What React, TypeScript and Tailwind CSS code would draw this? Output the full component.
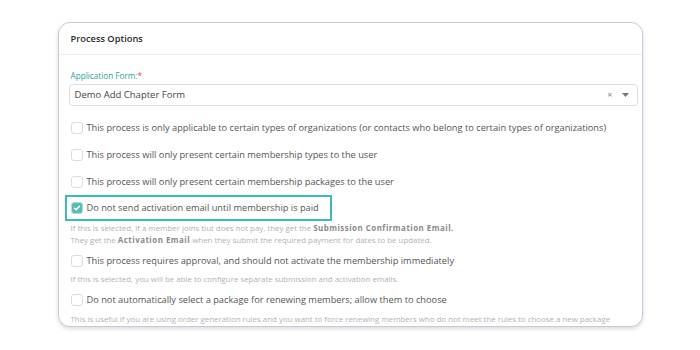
import React from "react";

function Box({ checked = false }: { checked?: boolean }) {
  if (checked) {
    return (
      <span className="flex h-[12px] w-[12px] shrink-0 items-center justify-center rounded-[3px] border border-[#a9dcd8] bg-[#5fb9b3]">
        <svg width="8" height="8" viewBox="0 0 8 8" fill="none">
          <path d="M1.5 4.2 L3.2 5.8 L6.5 2.2" stroke="white" strokeWidth="1.3" strokeLinecap="round" strokeLinejoin="round" />
        </svg>
      </span>
    );
  }
  return <span className="block h-[12px] w-[12px] shrink-0 rounded-[3px] border border-[#dcdcdc] bg-white" />;
}

function Row({ text, checked, h }: { text: string; checked?: boolean; h: string }) {
  return (
    <div className={`flex items-center gap-[4px] whitespace-nowrap text-[9.25px] text-[#555] ${h}`}>
      <Box checked={checked} />
      <span>{text}</span>
    </div>
  );
}

export default function App() {
  return (
    <div className="flex h-[350px] w-[700px] justify-center bg-white pt-[22px]" style={{ fontFamily: '"Open Sans", sans-serif' }}>
      <div className="h-[305px] w-[585px] overflow-hidden rounded-[12px] border border-[#c9c9de] bg-white shadow-[0_2px_4px_rgba(0,0,0,0.14)]">
        <div className="flex h-[32px] items-center border-b border-[#eeeeee] px-[12px] text-[9.3px] font-semibold text-[#2b2b2b]">
          Process Options
        </div>
        <div className="pl-[10px] pr-[4px] pt-[15px]">
          <div className="h-[12px] pl-[2px] text-[8.2px] leading-[12px] text-[#33a197]">
            Application Form:<span className="text-[#e04b4b]">*</span>
          </div>
          <div className="mt-[2px] flex h-[22px] items-center justify-between rounded-[4px] border border-[#dedede] pl-[5px] pr-[8px] text-[9.5px] text-[#444]">
            <span>Demo Add Chapter Form</span>
            <span className="flex items-center gap-[9px] text-[#888]">
              <span className="text-[9px]">×</span>
              <svg width="7" height="5" viewBox="0 0 7 5"><path d="M0 0 L7 0 L3.5 4 Z" fill="#777" /></svg>
            </span>
          </div>
          <div className="mt-[8px] flex flex-col pl-[2px]">
            <Row h="h-[27px]" text="This process is only applicable to certain types of organizations (or contacts who belong to certain types of organizations)" />
            <Row h="h-[27px]" text="This process will only present certain membership types to the user" />
            <Row h="h-[27px]" text="This process will only present certain membership packages to the user" />
          </div>
          <div className="-ml-[4px] flex h-[26px] w-[267px] items-center border-2 border-[#3dbdb2] pl-[4px]">
            <Row h="h-[22px]" checked text="Do not send activation email until membership is paid" />
          </div>
          <div className="mt-[1px] whitespace-nowrap pl-[2px] text-[7.9px] leading-[12px] text-[#b3b3b3]">
            <div>
              If this is selected, if a member joins but does not pay, they get the{" "}
              <b className="font-bold tracking-[0.5px] text-[#8a8a8a]">Submission Confirmation Email.</b>
            </div>
            <div>
              They get the <b className="font-bold tracking-[0.5px] text-[#8a8a8a]">Activation Email</b> when they submit the required payment for dates to be updated.
            </div>
          </div>
          <div className="mt-[4px] pl-[2px]">
            <Row h="h-[22px]" text="This process requires approval, and should not activate the membership immediately" />
          </div>
          <div className="mt-[1px] whitespace-nowrap pl-[2px] text-[7.9px] leading-[12px] text-[#b3b3b3]">
            If this is selected, you will be able to configure separate submission and activation emails.
          </div>
          <div className="mt-[4px] pl-[2px]">
            <Row h="h-[22px]" text="Do not automatically select a package for renewing members; allow them to choose" />
          </div>
          <div className="mt-[2px] whitespace-nowrap pl-[2px] text-[7.9px] leading-[12px] text-[#b3b3b3]">
            This is useful if you are using order generation rules and you want to force renewing members who do not meet the rules to choose a new package
          </div>
        </div>
      </div>
    </div>
  );
}
